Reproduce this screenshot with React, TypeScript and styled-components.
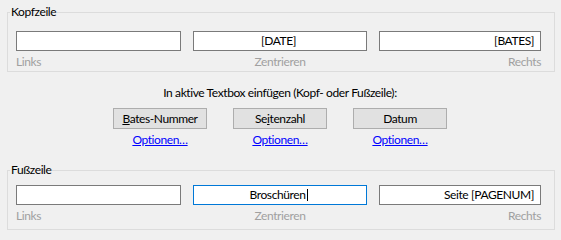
import React from "react";
import styled, { createGlobalStyle } from "styled-components";

const GlobalStyle = createGlobalStyle`
  html, body { margin: 0; padding: 0; background: #f0f0f0; }
  body {
    font-family: Lato, "Noto Sans", sans-serif;
    font-size: 12px;
    letter-spacing: -0.4px;
    color: #000;
  }
`;

type Align = "left" | "center" | "right";

const Window = styled.div`
  width: 561px;
  height: 240px;
  box-sizing: border-box;
  padding: 5px 6px 0 7px;
  display: flex;
  flex-direction: column;
`;

const Group = styled.fieldset<{ $pt: number; $pb: number; $mt?: number }>`
  margin: ${(p) => p.$mt ?? 0}px 0 0 0;
  padding: ${(p) => p.$pt}px 13px ${(p) => p.$pb}px 8px;
  border: 1px solid #dcdcdc;
  min-inline-size: 0;
`;

const Legend = styled.legend`
  margin-left: -6px;
  padding: 0 1px;
  line-height: 14px;
  font-size: 12px;
  color: #000;
`;

const FieldGrid = styled.div`
  display: grid;
  grid-template-columns: 165px 174px 162px;
  column-gap: 12px;
`;

const Column = styled.div`
  display: flex;
  flex-direction: column;
  gap: 3px;
`;

const Field = styled.div<{ $align: Align; $focused?: boolean }>`
  height: 20px;
  box-sizing: border-box;
  background: #fff;
  border: 1px solid ${(p) => (p.$focused ? "#0078d7" : "#7a7a7a")};
  padding: 2px 6px 0 3px;
  line-height: 14px;
  text-align: ${(p) => p.$align};
  white-space: nowrap;
  overflow: hidden;
`;

const Caret = styled.span`
  display: inline-block;
  width: 1px;
  height: 12px;
  background: #000;
  margin-left: 1px;
  vertical-align: -2px;
`;

const Hint = styled.div<{ $align: Align }>`
  line-height: 15px;
  color: #a0a0a0;
  text-align: ${(p) => p.$align};
`;

const Middle = styled.section`
  padding: 13px 2px 0 0;
  display: flex;
  flex-direction: column;
  align-items: center;
`;

const Intro = styled.div`
  line-height: 15px;
`;

const ButtonGrid = styled.div`
  margin-top: 8px;
  display: grid;
  grid-template-columns: repeat(3, 94px);
  column-gap: 26px;
`;

const ActionCell = styled.div`
  display: flex;
  flex-direction: column;
  align-items: center;
  gap: 3px;
`;

const Button = styled.button`
  width: 94px;
  height: 21px;
  box-sizing: border-box;
  margin: 0;
  padding: 0;
  background: #e1e1e1;
  border: 1px solid #adadad;
  font: inherit;
  letter-spacing: inherit;
  line-height: 17px;
  color: #000;
`;

const Mnemonic = styled.span`
  text-decoration: underline;
`;

const OptionLink = styled.a`
  line-height: 15px;
  color: #0000ff;
  text-decoration: underline;
  cursor: pointer;
`;

type FieldDef = { value: string; align: Align; hint: string; focused?: boolean };

const headerFields: FieldDef[] = [
  { value: "", align: "left", hint: "Links" },
  { value: "[DATE]", align: "center", hint: "Zentrieren" },
  { value: "[BATES]", align: "right", hint: "Rechts" },
];

const footerFields: FieldDef[] = [
  { value: "", align: "left", hint: "Links" },
  { value: "Broschüren", align: "center", hint: "Zentrieren", focused: true },
  { value: "Seite [PAGENUM]", align: "right", hint: "Rechts" },
];

const actions = [
  { before: "", key: "B", after: "ates-Nummer" },
  { before: "Se", key: "i", after: "tenzahl" },
  { before: "Datum", key: "", after: "" },
];

function Fields({ defs }: { defs: FieldDef[] }) {
  return (
    <FieldGrid>
      {defs.map((d, i) => (
        <Column key={i}>
          <Field $align={d.align} $focused={d.focused}>
            {d.value}
            {d.focused && <Caret />}
          </Field>
          <Hint $align={d.align}>{d.hint}</Hint>
        </Column>
      ))}
    </FieldGrid>
  );
}

export default function App() {
  return (
    <>
      <GlobalStyle />
      <Window>
        <Group $pt={12} $pb={2}>
          <Legend>Kopfzeile</Legend>
          <Fields defs={headerFields} />
        </Group>
        <Middle>
          <Intro>In aktive Textbox einfügen (Kopf- oder Fußzeile):</Intro>
          <ButtonGrid>
            {actions.map((a, i) => (
              <ActionCell key={i}>
                <Button type="button">
                  {a.before}
                  {a.key && <Mnemonic>{a.key}</Mnemonic>}
                  {a.after}
                </Button>
                <OptionLink>Optionen…</OptionLink>
              </ActionCell>
            ))}
          </ButtonGrid>
        </Middle>
        <Group $pt={8} $pb={6} $mt={16}>
          <Legend>Fußzeile</Legend>
          <Fields defs={footerFields} />
        </Group>
      </Window>
    </>
  );
}
